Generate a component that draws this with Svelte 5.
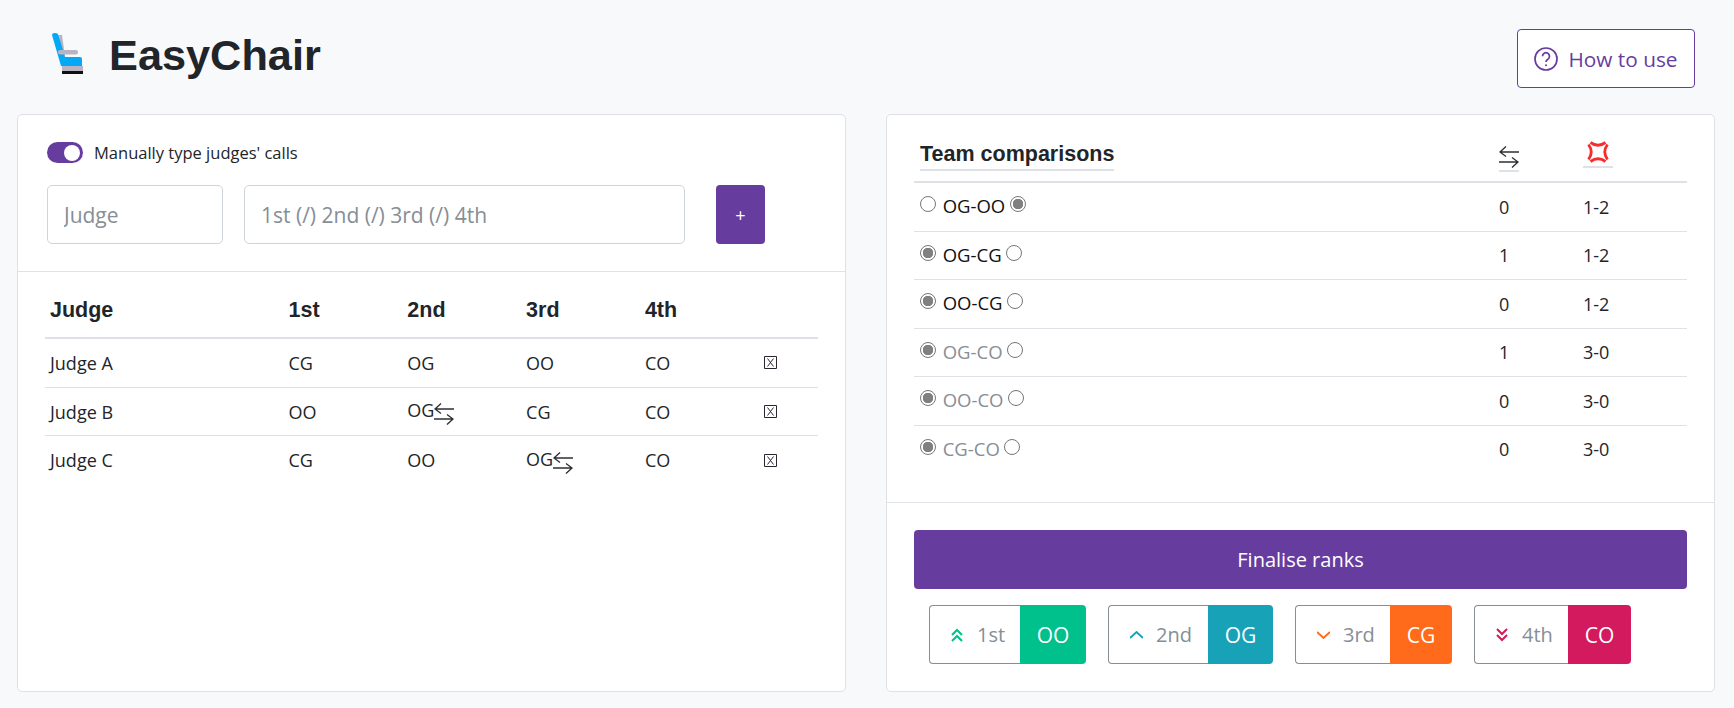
<script>
  const calls = [
    { judge: 'Judge A', order: [['CG'], ['OG'], ['OO'], ['CO']] },
    { judge: 'Judge B', order: [['OO'], ['OG', true], ['CG'], ['CO']] },
    { judge: 'Judge C', order: [['CG'], ['OO'], ['OG', true], ['CO']] }
  ];
  const comparisons = [
    { name: 'OG-OO', pick: 'right', swaps: 0, score: '1-2' },
    { name: 'OG-CG', pick: 'left', swaps: 1, score: '1-2' },
    { name: 'OO-CG', pick: 'left', swaps: 0, score: '1-2' },
    { name: 'OG-CO', pick: 'left', swaps: 1, score: '3-0', faded: true },
    { name: 'OO-CO', pick: 'left', swaps: 0, score: '3-0', faded: true },
    { name: 'CG-CO', pick: 'left', swaps: 0, score: '3-0', faded: true }
  ];
  const ranks = [
    { label: '1st', team: 'OO', colour: '#00c08b', w: 91, tw: 66, path: 'M1 7l5-5 5 5M1 13l5-5 5 5' },
    { label: '2nd', team: 'OG', colour: '#17a2b8', w: 100, tw: 65, path: 'M0 10l6.500-6 6.500 6' },
    { label: '3rd', team: 'CG', colour: '#ff6b1a', w: 95, tw: 62, path: 'M0 4l6.500 6 6.500-6' },
    { label: '4th', team: 'CO', colour: '#d31a5e', w: 94, tw: 63, path: 'M1 1l5 5 5-5M1 7l5 5 5-5' }
  ];
</script>

{#snippet swap()}
  <svg class="swap" viewBox="0 0 20 22" aria-hidden="true">
    <path d="M20 6H1M7 .5 1 6l6 4.500M0 16h19M13 11.500l6 4.500-6 5.500" />
  </svg>
{/snippet}

<div class="page">
  <header class="top">
    <div class="brand">
      <svg class="logo" viewBox="48 30 40 48" aria-hidden="true">
        <path fill="#b9b3c4" d="M59 36h3l3 21h-3zM62 67h21v5H62z" />
        <path fill="#111" d="M62 72h21v3H62z" />
        <path fill="#03a9f4" d="M52 36q0-2 3-2 3 0 3.500 2l6.500 22h15q2 0 2 2v7H61z" />
        <rect fill="#b9b3c4" x="58" y="51" width="20" height="4.500" rx="2" />
      </svg>
      <h1>EasyChair</h1>
    </div>
    <button class="how" type="button">
      <svg viewBox="0 0 24 24" aria-hidden="true">
        <circle cx="12" cy="12" r="11" />
        <path d="M8.500 9.200a3.500 3.500 0 1 1 5.400 3c-1.300.8-1.900 1.400-1.900 2.800" />
        <circle class="dot" cx="12" cy="18.300" r="1" />
      </svg>
      How to use
    </button>
  </header>

  <main class="columns">
    <section class="card">
      <div class="entry">
        <div class="switch-row">
          <span class="switch"><span class="knob"></span></span>
          <span>Manually type judges' calls</span>
        </div>
        <div class="fields">
          <input class="judge-input" placeholder="Judge" />
          <input class="order-input" placeholder="1st (/) 2nd (/) 3rd (/) 4th" />
          <button class="add" type="button">+</button>
        </div>
      </div>
      <div class="judges">
        <table>
          <thead>
            <tr>
              <th class="c-judge">Judge</th>
              <th class="c-pos">1st</th>
              <th class="c-pos">2nd</th>
              <th class="c-pos">3rd</th>
              <th class="c-pos">4th</th>
              <th></th>
            </tr>
          </thead>
          <tbody>
            {#each calls as row}
              <tr>
                <td>{row.judge}</td>
                {#each row.order as [team, swapped]}
                  <td>{team}{#if swapped}{@render swap()}{/if}</td>
                {/each}
                <td>
                  <svg class="del" viewBox="0 0 13 13" aria-hidden="true">
                    <path d="M.5.5h12v12H.5zM3.500 2.500l6 8M9.500 2.500l-6 8" />
                  </svg>
                </td>
              </tr>
            {/each}
          </tbody>
        </table>
      </div>
    </section>

    <section class="card">
      <div class="compare">
        <table>
          <thead>
            <tr>
              <th class="c-team"><span class="under">Team comparisons</span></th>
              <th class="c-swaps"><span class="under">{@render swap()}</span></th>
              <th><span class="under">
                <svg class="anger" viewBox="0 0 24 24" aria-hidden="true">
                  <path d="M4.500 2.500Q12 8 19.500 2.500M21.500 4.500Q16 12 21.500 19.500M19.500 21.500Q12 16 4.500 21.500M2.500 19.500Q8 12 2.500 4.500" />
                </svg>
              </span></th>
            </tr>
          </thead>
          <tbody>
            {#each comparisons as c}
              <tr>
                <td>
                  <input type="radio" disabled checked={c.pick === 'left'} />
                  <span class="pair" class:faded={c.faded}>{c.name}</span>
                  <input type="radio" disabled checked={c.pick === 'right'} />
                </td>
                <td>{c.swaps}</td>
                <td>{c.score}</td>
              </tr>
            {/each}
          </tbody>
        </table>
      </div>
      <div class="result">
        <button class="finalise" type="button">Finalise ranks</button>
        <div class="ranks">
          {#each ranks as r}
            <div class="rank">
              <span class="place" style="width:{r.w}px">
                <svg viewBox="0 0 13 14" style="stroke:{r.colour}" aria-hidden="true"><path d={r.path} /></svg>
                {r.label}
              </span>
              <span class="team" style="background:{r.colour};width:{r.tw}px">{r.team}</span>
            </div>
          {/each}
        </div>
      </div>
    </section>
  </main>
</div>

<style>
  :global(body) {
    background: #f8f9fb;
    color: #212529;
    font-family: "Open Sans", sans-serif;
  }
  .page {
    height: 708px;
    padding: 0 19px 16px 17px;
    box-sizing: border-box;
    display: flex;
    flex-direction: column;
  }
  .top {
    height: 114px;
    flex: none;
    display: flex;
    justify-content: space-between;
    align-items: flex-start;
    padding: 29px 20px 0 31px;
    box-sizing: border-box;
  }
  .brand {
    display: flex;
    align-items: center;
    gap: 21px;
    height: 48px;
  }
  .logo { width: 40px; height: 48px; }
  h1 {
    margin: 3px 0 0;
    font: 700 43.300px/48px "Liberation Sans", sans-serif;
  }
  .how {
    width: 178px;
    height: 59px;
    display: flex;
    align-items: center;
    justify-content: center;
    gap: 10px;
    border: 1px solid #663d9f;
    border-radius: 4px;
    background: #fff;
    color: #663d9f;
    font: 20.800px "Open Sans", sans-serif;
    padding: 0;
  }
  .how svg {
    width: 24px;
    height: 24px;
    fill: none;
    stroke: #663d9f;
    stroke-width: 1.700;
  }
  .how .dot { fill: #663d9f; stroke: none; }
  .columns {
    flex: 1;
    display: grid;
    grid-template-columns: 1fr 1fr;
    gap: 40px;
  }
  .card {
    background: #fff;
    border: 1px solid #dfe1e5;
    border-radius: 5px;
    display: flex;
    flex-direction: column;
  }
  .entry {
    height: 157px;
    box-sizing: border-box;
    padding: 27px 80px 0 29px;
    border-bottom: 1px solid #dfe2e6;
    flex: none;
  }
  .switch-row {
    display: flex;
    align-items: center;
    gap: 11px;
    font-size: 16.500px;
    height: 21px;
  }
  .switch {
    width: 36px;
    height: 21px;
    border-radius: 11px;
    background: #663d9f;
    display: flex;
    align-items: center;
    justify-content: flex-end;
    padding-right: 3px;
    box-sizing: border-box;
  }
  .knob {
    width: 16px;
    height: 16px;
    border-radius: 50%;
    background: #fff;
  }
  .fields {
    display: flex;
    margin-top: 22px;
    height: 59px;
  }
  input:not([type]) {
    box-sizing: border-box;
    height: 59px;
    border: 1px solid #ced4da;
    border-radius: 5px;
    padding: 0 16px;
    font: 21px "Open Sans", sans-serif;
    background: #fff;
  }
  input::placeholder { color: #868e96; opacity: 1; }
  .judge-input { width: 176px; }
  .order-input { width: 441px; margin: 0 31px 0 21px; }
  .add {
    width: 49px;
    border: 0;
    border-radius: 4px;
    background: #663d9f;
    color: #fff;
    font: 18px "Open Sans", sans-serif;
  }
  table { border-collapse: collapse; width: 100%; }
  th { text-align: left; }
  .judges { padding: 0 27px; }
  .judges th {
    font: 700 21.500px "Liberation Sans", sans-serif;
    height: 66px;
    border-bottom: 2px solid #dee2e6;
    padding: 11px 0 0 5px;
    box-sizing: border-box;
  }
  .judges td {
    height: 47.700px;
    padding: 0 0 0 5px;
    font-size: 18px;
    border-bottom: 1px solid #dee2e6;
    white-space: nowrap;
  }
  .judges tr:last-child td { border-bottom: 0; }
  .c-judge { width: 238.500px; }
  .c-pos { width: 118.800px; }
  .swap {
    width: 20px;
    height: 22px;
    fill: none;
    stroke: #2d2f33;
    stroke-width: 1.300;
    vertical-align: -8px;
  }
  .del {
    display: block;
    width: 13px;
    height: 13px;
    fill: none;
    stroke: #2a2530;
    stroke-width: 1;
  }
  .compare {
    height: 388px;
    box-sizing: border-box;
    padding: 0 27px;
    border-bottom: 1px solid #dfe2e6;
    flex: none;
  }
  .compare th {
    height: 67px;
    padding: 16px 0 0 6px;
    box-sizing: border-box;
    border-bottom: 2px solid #dee2e6;
    vertical-align: middle;
  }
  .under {
    display: inline-block;
    border-bottom: 2px solid #dee2e6;
    padding-bottom: 2px;
    font: 700 21.500px "Liberation Sans", sans-serif;
  }
  .c-team { width: 579px; }
  .c-swaps { width: 84px; }
  .anger {
    width: 24px;
    height: 24px;
    fill: none;
    stroke: #f92c2c;
    stroke-width: 2.800;
    display: block;
    margin: 0 3px;
  }
  .compare td {
    height: 47.500px;
    padding: 0 0 0 6px;
    font-size: 18px;
    border-bottom: 1px solid #dee2e6;
  }
  .compare tr:last-child td { border-bottom: 0; }
  input[type="radio"] {
    appearance: none;
    box-sizing: border-box;
    margin: 0 2px 8px 0;
    width: 16px;
    height: 16px;
    vertical-align: middle;
    border: 1px solid #767676;
    border-radius: 50%;
    background: #fff;
  }
  input[type="radio"]:checked {
    background: radial-gradient(circle, #808080 0 5px, #fff 5.500px);
  }
  .pair { color: #111; font-size: 18.500px; }
  .faded { color: #868e96; }
  .result {
    padding: 27px 27px 0;
  }
  .finalise {
    width: 100%;
    height: 59px;
    border: 0;
    border-radius: 4px;
    background: #663d9f;
    color: #fff;
    font: 20px "Open Sans", sans-serif;
  }
  .ranks {
    display: flex;
    gap: 22px;
    margin-top: 16px;
    padding-left: 15px;
  }
  .rank {
    display: flex;
    height: 59px;
  }
  .place {
    box-sizing: border-box;
    border: 1px solid #868e96;
    border-right: 0;
    border-radius: 4px 0 0 4px;
    padding-left: 21px;
    display: flex;
    align-items: center;
    gap: 13px;
    color: #868e96;
    font-size: 20px;
  }
  .place svg {
    width: 13px;
    height: 14px;
    fill: none;
    stroke-width: 2;
  }
  .team {
    color: #fff;
    border-radius: 0 4px 4px 0;
    display: flex;
    align-items: center;
    justify-content: center;
    font-size: 21px;
  }
</style>
